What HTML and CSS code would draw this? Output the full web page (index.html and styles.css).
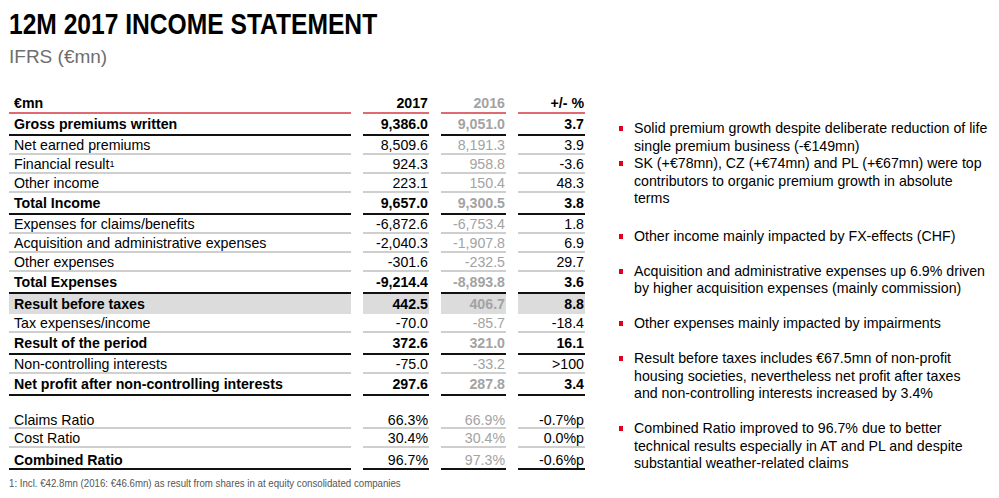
FILE: index.html
```html
<!DOCTYPE html>
<html>
<head>
<meta charset="utf-8">
<link rel="stylesheet" href="styles.css">
</head>
<body>
<div class="slide">
  <h1 class="title">12M 2017 INCOME STATEMENT</h1>
  <p class="subtitle">IFRS (€mn)</p>
  <div class="content">
    <div class="left">
      <div class="tbl">
        <div class="row head"><span class="lbl">€mn</span><span class="v">2017</span><span class="v prev">2016</span><span class="v">+/- %</span></div>
        <div class="row bold"><span class="lbl">Gross premiums written</span><span class="v">9,386.0</span><span class="v prev">9,051.0</span><span class="v">3.7</span></div>
        <div class="row"><span class="lbl">Net earned premiums</span><span class="v">8,509.6</span><span class="v prev">8,191.3</span><span class="v">3.9</span></div>
        <div class="row"><span class="lbl">Financial result<sup>1</sup></span><span class="v">924.3</span><span class="v prev">958.8</span><span class="v">-3.6</span></div>
        <div class="row"><span class="lbl">Other income</span><span class="v">223.1</span><span class="v prev">150.4</span><span class="v">48.3</span></div>
        <div class="row bold"><span class="lbl">Total Income</span><span class="v">9,657.0</span><span class="v prev">9,300.5</span><span class="v">3.8</span></div>
        <div class="row"><span class="lbl">Expenses for claims/benefits</span><span class="v">-6,872.6</span><span class="v prev">-6,753.4</span><span class="v">1.8</span></div>
        <div class="row"><span class="lbl">Acquisition and administrative expenses</span><span class="v">-2,040.3</span><span class="v prev">-1,907.8</span><span class="v">6.9</span></div>
        <div class="row"><span class="lbl">Other expenses</span><span class="v">-301.6</span><span class="v prev">-232.5</span><span class="v">29.7</span></div>
        <div class="row bold"><span class="lbl">Total Expenses</span><span class="v">-9,214.4</span><span class="v prev">-8,893.8</span><span class="v">3.6</span></div>
        <div class="row bold shaded"><span class="lbl">Result before taxes</span><span class="v">442.5</span><span class="v prev">406.7</span><span class="v">8.8</span></div>
        <div class="row"><span class="lbl">Tax expenses/income</span><span class="v">-70.0</span><span class="v prev">-85.7</span><span class="v">-18.4</span></div>
        <div class="row bold"><span class="lbl">Result of the period</span><span class="v">372.6</span><span class="v prev">321.0</span><span class="v">16.1</span></div>
        <div class="row"><span class="lbl">Non-controlling interests</span><span class="v">-75.0</span><span class="v prev">-33.2</span><span class="v">&gt;100</span></div>
        <div class="row bold"><span class="lbl">Net profit after non-controlling interests</span><span class="v">297.6</span><span class="v prev">287.8</span><span class="v">3.4</span></div>
      </div>
      <div class="tbl ratios">
        <div class="row first"><span class="lbl">Claims Ratio</span><span class="v">66.3%</span><span class="v prev">66.9%</span><span class="v">-0.7%p</span></div>
        <div class="row"><span class="lbl">Cost Ratio</span><span class="v">30.4%</span><span class="v prev">30.4%</span><span class="v">0.0%p</span></div>
        <div class="row total"><span class="lbl">Combined Ratio</span><span class="v">96.7%</span><span class="v prev">97.3%</span><span class="v">-0.6%p</span></div>
      </div>
      <p class="foot">1: Incl. €42.8mn (2016: €46.6mn) as result from shares in at equity consolidated companies</p>
    </div>
    <ul class="bullets">
      <li>Solid premium growth despite deliberate reduction of life single premium business (-€149mn)</li>
      <li class="tight">SK (+€78mn), CZ (+€74mn) and PL (+€67mn) were top contributors to organic premium growth in absolute<br>terms</li>
      <li class="wide">Other income mainly impacted by FX-effects (CHF)</li>
      <li>Acquisition and administrative expenses up 6.9% driven by higher acquisition expenses (mainly commission)</li>
      <li>Other expenses mainly impacted by impairments</li>
      <li>Result before taxes includes €67.5mn of non-profit housing societies, nevertheless net profit after taxes<br>and non-controlling interests increased by 3.4%</li>
      <li>Combined Ratio improved to 96.7% due to better technical results especially in AT and PL and despite substantial weather-related claims</li>
    </ul>
  </div>
</div>
</body>
</html>
```

FILE: styles.css
```css
* { box-sizing: border-box; }
html, body { margin: 0; padding: 0; background: #fff; }
body { font-family: "Liberation Sans", Arial, sans-serif; color: #000; }
.slide { width: 999px; height: 498px; padding: 7px 0 0 9px; overflow: hidden; }
.title {
  margin: 0;
  font-family: "Liberation Sans", Arial, sans-serif;
  font-weight: bold;
  font-size: 30px;
  line-height: 34px;
  color: #000;
  white-space: nowrap;
  transform: scaleX(0.82);
  transform-origin: left center;
}
.subtitle { margin: 5px 0 0; font-size: 19px; line-height: 22px; color: #6e6e6e; }
.content { display: flex; margin-top: 24px; }
.left { width: 576px; }
.tbl {
  display: grid;
  grid-template-columns: 342px 66px 65px 67px;
  column-gap: 12px;
  font-size: 14.2px;
}
.row { display: contents; }
.row > span {
  height: 19px;
  display: flex;
  align-items: center;
  border-bottom: 2px solid #cfcfcf;
  white-space: nowrap;
}
.row > .lbl { padding-left: 5px; }
.row > .v { justify-content: flex-end; padding-right: 1px; }
.row > .prev { color: #a3a3a3; }
.row.bold > span { font-weight: bold; height: 22px; border-bottom-color: #111; }
.row.head > span { font-weight: bold; height: 22px; border-bottom: 2px solid #df6a70; padding-top: 2px; }
.row.shaded > span { background: #dcdcdc; border-bottom: none; height: 20px; }
.row.first > span { height: 21px; padding-top: 5px; }
.row.total > span { height: 22px; border-bottom-color: #111; padding-top: 3px; }
.row.total > .lbl { font-weight: bold; }
.lbl sup { font-size: 9px; font-weight: normal; vertical-align: 6px; line-height: 0; }
.ratios { margin-top: 12px; }
.foot {
  margin: 7px 0 0;
  font-size: 11px;
  color: #555;
  white-space: nowrap;
  transform: scaleX(0.88);
  transform-origin: left center;
}
.bullets {
  list-style: none;
  margin: 28px 0 0 34px;
  padding: 0;
  width: 373px;
  font-size: 14.2px;
  line-height: 17.5px;
}
.bullets li { position: relative; padding-left: 15px; margin-top: 17.5px; }
.bullets li:first-child { margin-top: 0; }
.bullets li.tight { margin-top: 0; }
.bullets li.wide { margin-top: 20px; }
.bullets li::before {
  content: "";
  position: absolute;
  left: 0;
  top: 6px;
  width: 4px;
  height: 5px;
  background: #e0001b;
}
```
